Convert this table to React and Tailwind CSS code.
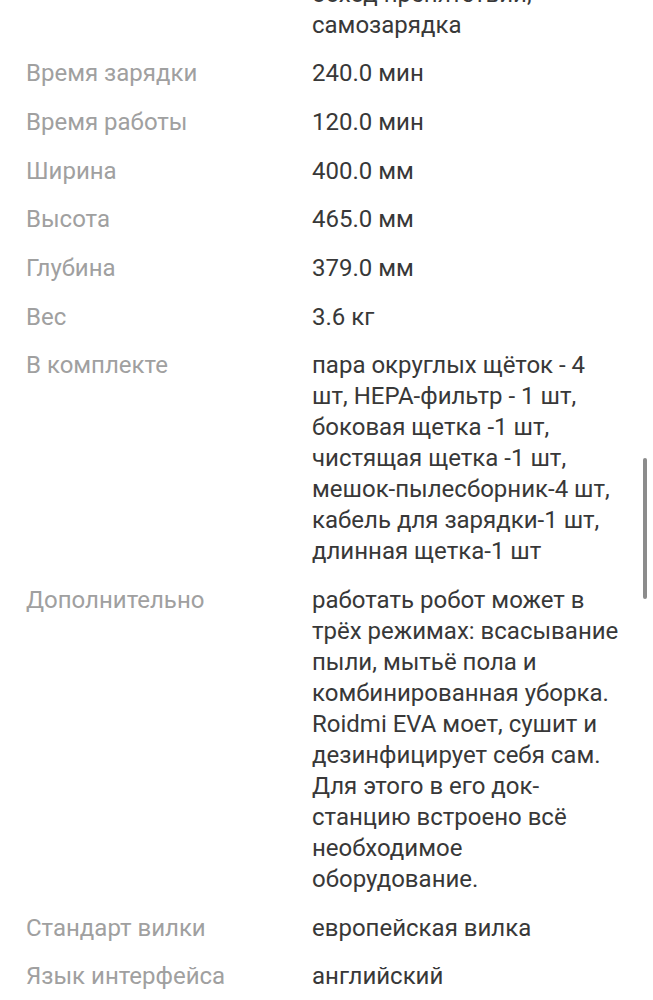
const specs = [
  { label: 'Функции', value: ['сухая и влажная уборка,', 'обход препятствий,', 'самозарядка'] },
  { label: 'Время зарядки', value: ['240.0 мин'] },
  { label: 'Время работы', value: ['120.0 мин'] },
  { label: 'Ширина', value: ['400.0 мм'] },
  { label: 'Высота', value: ['465.0 мм'] },
  { label: 'Глубина', value: ['379.0 мм'] },
  { label: 'Вес', value: ['3.6 кг'] },
  {
    label: 'В комплекте',
    value: [
      'пара округлых щёток - 4',
      'шт, HEPA-фильтр - 1 шт,',
      'боковая щетка -1 шт,',
      'чистящая щетка -1 шт,',
      'мешок-пылесборник-4 шт,',
      'кабель для зарядки-1 шт,',
      'длинная щетка-1 шт',
    ],
  },
  {
    label: 'Дополнительно',
    value: [
      'работать робот может в',
      'трёх режимах: всасывание',
      'пыли, мытьё пола и',
      'комбинированная уборка.',
      'Roidmi EVA моет, сушит и',
      'дезинфицирует себя сам.',
      'Для этого в его док-',
      'станцию встроено всё',
      'необходимое',
      'оборудование.',
    ],
  },
  { label: 'Стандарт вилки', value: ['европейская вилка'] },
  { label: 'Язык интерфейса', value: ['английский'] },
  { label: 'Страна производства', value: ['Китай'] },
]

export default function App() {
  return (
    <div className="relative h-[1000px] w-[653px] overflow-hidden bg-white font-['Roboto','Noto_Sans',sans-serif]">
      <div className="mt-[-52.5px] flex flex-col gap-y-[17.7px] pl-[26px] pr-[10px] text-[24px] leading-[31px]">
        {specs.map((row) => (
          <div key={row.label} className="flex">
            <div className="w-[286px] shrink-0 text-[#a0a0a0]">{row.label}</div>
            <div className="flex-1 text-[#383838]">
              {row.value.map((line, i) => (
                <div key={i} className="whitespace-nowrap">{line}</div>
              ))}
            </div>
          </div>
        ))}
      </div>

      {/* scroll indicator */}
      <div className="absolute left-[643px] top-[458px] h-[141px] w-[4px] rounded-full bg-[#8c8c8c]" />
    </div>
  )
}
